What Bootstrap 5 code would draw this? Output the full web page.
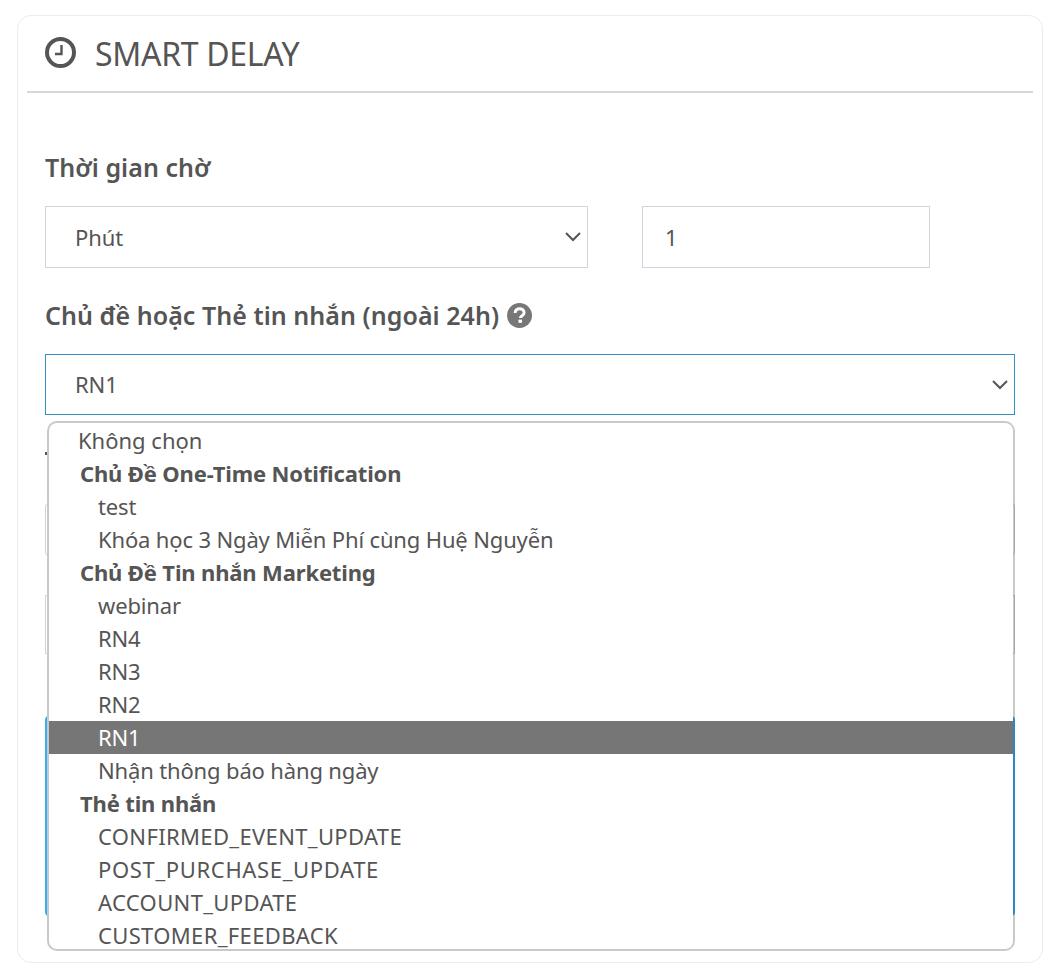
<!DOCTYPE html>
<html lang="vi">
<head>
<meta charset="UTF-8">
<title>Smart Delay</title>
<link href="https://cdn.jsdelivr.net/npm/bootstrap@5.3.2/dist/css/bootstrap.min.css" rel="stylesheet">
<script src="https://cdn.jsdelivr.net/npm/bootstrap@5.3.2/dist/js/bootstrap.bundle.min.js"></script>
<style>
body { background: #fff; color: #555; font-family: "Noto Sans", sans-serif; }
.delay-panel { margin: 15px 13px 14px 17px; height: 948px; border: 1px solid #ececec; border-radius: 14px; padding: 0 9px; position: relative; overflow: hidden; }
.delay-head { height: 77px; border-bottom: 2px solid #d6d9dc; padding-left: 18px; gap: 18px; }
.delay-head svg { margin-bottom: 2px; }
.delay-head h1 { margin: 0; padding-top: 2px; font-size: 32px; font-weight: 400; letter-spacing: -.3px; color: #555; }
.delay-body { padding: 0 18px; }
.field-title { font-size: 25px; font-weight: 600; letter-spacing: .05px; color: #555; margin: 0; line-height: 34px; }
.title-wait { margin-top: 57px; }
.title-topic { margin-top: 30px; }
.field-row { margin-top: 22px; }
.box-input { height: 62px; border: 1px solid #d2d3de; background: #fff; padding: 0 6px 0 29px; font-size: 22px; letter-spacing: -.1px; color: #555; }
.box-unit { width: 543px; }
.box-amount { width: 288px; margin-left: 54px; padding-left: 22px; }
.box-active { height: 61px; border-color: #3490c0; }
.chev { width: 16px; height: 10px; }
.covered-mark { width: 2px; height: 3px; margin-top: 37px; background: #555; }
.covered-one { height: 55px; margin-top: 47px; border: 1px solid #d2d3de; border-radius: 5px; }
.covered-two { height: 59px; margin-top: 38px; border: 1px solid #d2d3de; }
.covered-three { height: 200px; margin-top: 62px; border: 2px solid #35b0f0; border-radius: 4px; }
.opt-menu { position: absolute; left: 29px; right: 27px; top: 405px; height: 530px; padding-top: 1px; border: 2px solid #c9c9c9; border-right-color: rgba(0,0,0,.21); border-radius: 10px; background: #fff; background-clip: padding-box; overflow: hidden; font-size: 22px; letter-spacing: -.15px; line-height: 33px; color: #555; }
.opt-menu div { height: 33px; padding-left: 49px; white-space: nowrap; }
.opt-menu .opt-top { padding-left: 29px; letter-spacing: 0; }
.opt-menu .opt-group { padding-left: 31px; font-weight: 700; }
.opt-menu .opt-picked { background: #767676; color: #fff; }
.opt-menu .opt-caps { letter-spacing: .35px; }
.opt-menu .opt-caps-wide { letter-spacing: .65px; }
</style>
</head>
<body>
<div class="delay-panel">
    <div class="delay-head d-flex align-items-center">
        <svg width="32" height="32" viewBox="0 0 32 32" fill="none" stroke="#555"><circle cx="15.5" cy="15.5" r="13.5" stroke-width="4"/><path d="M16.5 8V17H10" stroke-width="2.4"/></svg>
        <h1>SMART DELAY</h1>
    </div>
    <div class="delay-body">
        <p class="field-title title-wait">Thời gian chờ</p>
        <div class="d-flex field-row">
            <div class="box-input box-unit d-flex align-items-center justify-content-between">Phút
                <svg class="chev" viewBox="0 0 16 10" fill="none" stroke="#555" stroke-width="2"><path d="M1 1l7 7 7-7"/></svg></div>
            <div class="box-input box-amount d-flex align-items-center">1</div>
        </div>
        <p class="field-title title-topic d-flex align-items-center gap-2">Chủ đề hoặc Thẻ tin nhắn (ngoài 24h)
            <svg width="25" height="25" viewBox="0 0 24 24"><circle cx="12" cy="12" r="12" fill="#777"/><path d="M7.8 9.5C7.8 6.8 10 5.5 12.2 5.5s4.2 1.3 4.2 3.8c0 3-3.6 2.8-3.6 5.2" fill="none" stroke="#fff" stroke-width="2.8"/><rect x="11" y="16" width="3.4" height="3" fill="#fff"/></svg></p>
        <div class="box-input box-active d-flex align-items-center justify-content-between field-row">RN1
            <svg class="chev" viewBox="0 0 16 10" fill="none" stroke="#555" stroke-width="2"><path d="M1 1l7 7 7-7"/></svg></div>
        <div class="covered-mark"></div>
        <div class="covered-one"></div>
        <div class="covered-two"></div>
        <div class="covered-three"></div>
    </div>
    <div class="opt-menu">
        <div class="opt-top">Không chọn</div>
        <div class="opt-group">Chủ Đề One-Time Notification</div>
        <div>test</div>
        <div>Khóa học 3 Ngày Miễn Phí cùng Huệ Nguyễn</div>
        <div class="opt-group">Chủ Đề Tin nhắn Marketing</div>
        <div>webinar</div>
        <div>RN4</div>
        <div>RN3</div>
        <div>RN2</div>
        <div class="opt-picked">RN1</div>
        <div>Nhận thông báo hàng ngày</div>
        <div class="opt-group">Thẻ tin nhắn</div>
        <div class="opt-caps">CONFIRMED_EVENT_UPDATE</div>
        <div class="opt-caps-wide">POST_PURCHASE_UPDATE</div>
        <div class="opt-caps">ACCOUNT_UPDATE</div>
        <div class="opt-caps">CUSTOMER_FEEDBACK</div>
    </div>
</div>
</body>
</html>
